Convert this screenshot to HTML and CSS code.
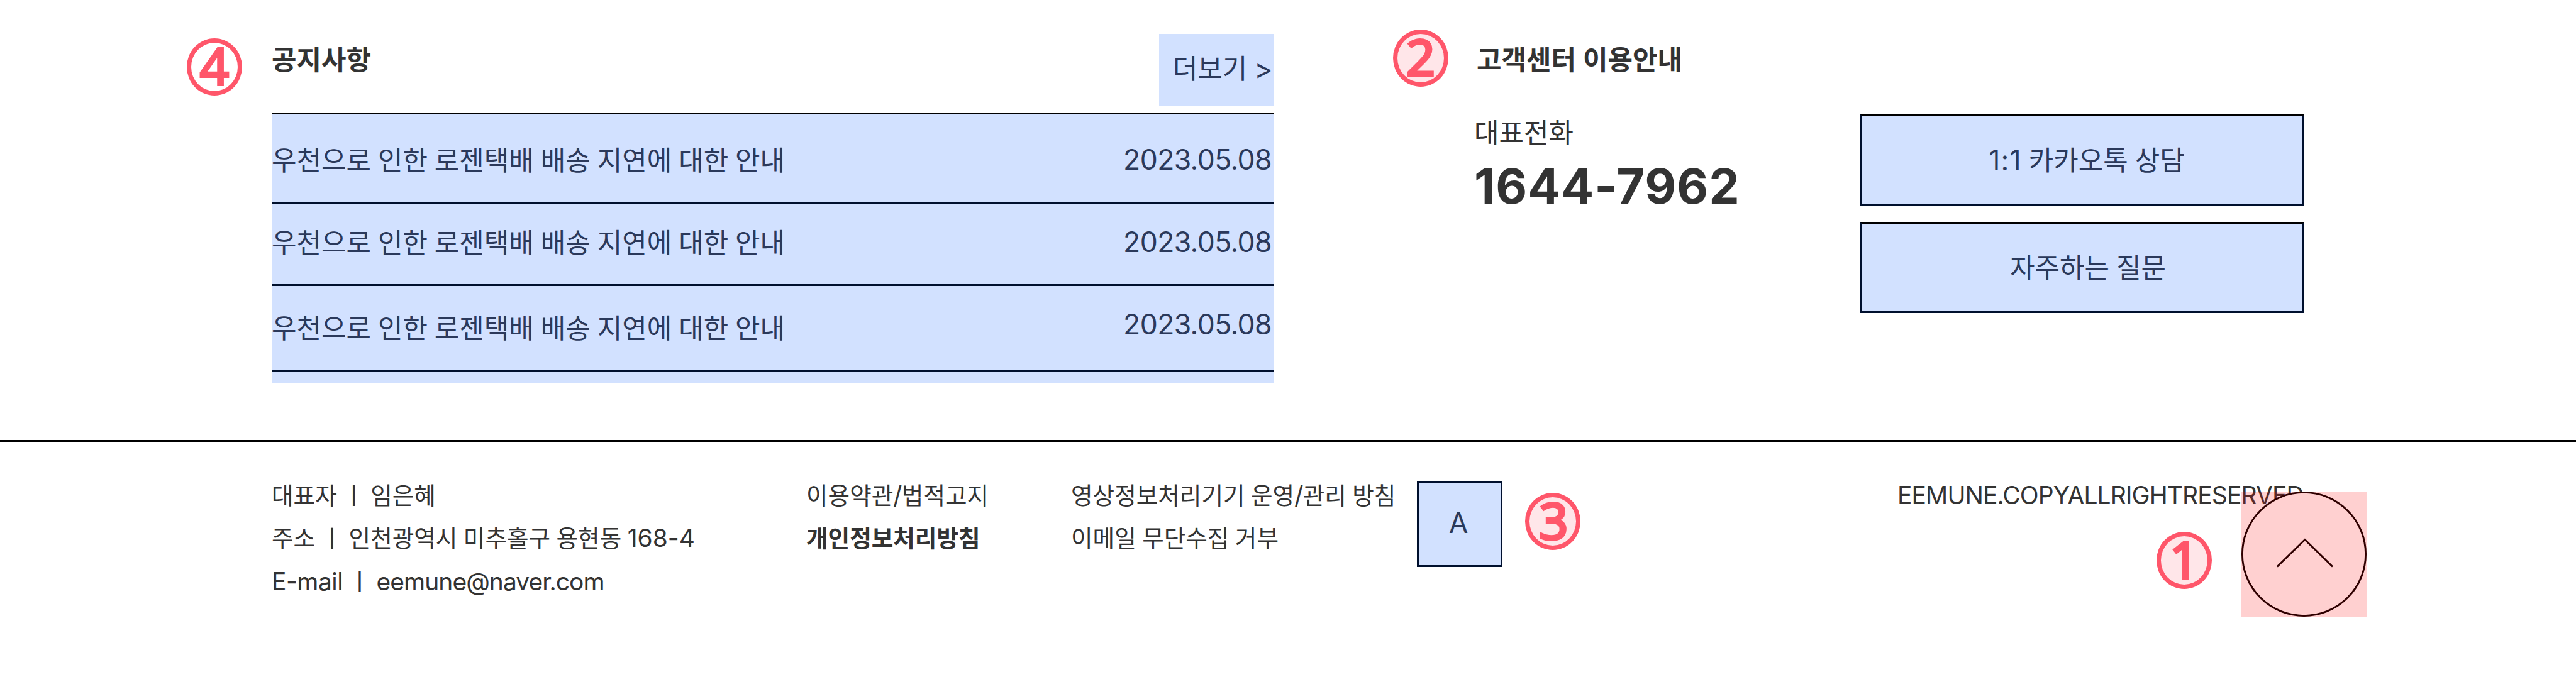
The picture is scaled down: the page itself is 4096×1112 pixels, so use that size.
FILE: index.html
```html
<!DOCTYPE html>
<html lang="ko">
<head>
<meta charset="utf-8">
<title>EEMUNE</title>
<link rel="stylesheet" href="styles.css">
</head>
<body>
<main class="top">
  <section class="notice">
    <div class="badge badge-4">4</div>
    <header class="notice-head">
      <h2 class="title">공지사항</h2>
      <a class="more">더보기 <span class="en">&gt;</span></a>
    </header>
    <ul class="list">
      <li class="row row-1"><span class="subject">우천으로 인한 로젠택배 배송 지연에 대한 안내</span><time class="en">2023.05.08</time></li>
      <li class="row row-2"><span class="subject">우천으로 인한 로젠택배 배송 지연에 대한 안내</span><time class="en">2023.05.08</time></li>
      <li class="row row-3"><span class="subject">우천으로 인한 로젠택배 배송 지연에 대한 안내</span><time class="en">2023.05.08</time></li>
    </ul>
  </section>
  <section class="center">
    <div class="badge badge-2 filled">2</div>
    <div class="contact">
      <h2 class="title">고객센터 이용안내</h2>
      <p class="label">대표전화</p>
      <p class="phone">1644-7962</p>
    </div>
    <div class="buttons">
      <a class="button"><span class="en ratio">1:1</span> 카카오톡 상담</a>
      <a class="button faq">자주하는 질문</a>
    </div>
  </section>
</main>
<footer class="footer">
  <div class="col info">
    <p>대표자 ㅣ 임은혜</p>
    <p>주소 ㅣ 인천광역시 미추홀구 용현동 <span class="en lot">168-4</span></p>
    <p><span class="en">E-mail</span> ㅣ <span class="en email">eemune@naver.com</span></p>
  </div>
  <div class="col terms">
    <p>이용약관<span class="en">/</span>법적고지</p>
    <p class="strong">개인정보처리방침</p>
  </div>
  <div class="col policy">
    <p>영상정보처리기기 운영<span class="en">/</span>관리 방침</p>
    <p>이메일 무단수집 거부</p>
  </div>
  <div class="mark">A</div>
  <div class="badge badge-3 filled">3</div>
  <p class="copyright">EEMUNE.COPYALLRIGHTRESERVED</p>
  <div class="badge badge-1 filled">1</div>
  <a class="to-top"><svg viewBox="0 0 280 280"><circle cx="140" cy="140" r="138"/><path d="M80 168L142 107.5L204 168"/></svg></a>
</footer>
</body>
</html>
```
FILE: styles.css
```css
* { box-sizing: border-box; margin: 0; padding: 0; }

body {
  width: 4096px;
  height: 1112px;
  overflow: hidden;
  position: relative;
  background: #fff;
  color: #333;
  font: 400 42.95px/60px "Noto Sans CJK KR", sans-serif;
  word-spacing: -1.1px;
  white-space: nowrap;
}

ul { list-style: none; }

/* Latin letters and digits inside Korean text */
.en {
  font-family: Inter, "Noto Sans CJK KR", sans-serif;
  font-size: 1.036em;
  line-height: 1;
  letter-spacing: -0.013em;
}

.top { display: flex; height: 700px; }

/* Notices */
.notice { width: 1593px; margin-left: 432px; padding-top: 54px; }
.notice-head { display: flex; justify-content: space-between; height: 125px; }
.title { font-size: 42.95px; font-weight: 700; line-height: 60px; padding-top: 8px; }
.more {
  width: 182px;
  height: 114px;
  padding: 22px 2px 0 0;
  background: #d2e1ff;
  color: #2b395b;
  text-align: right;
}
.list { height: 430px; border-top: 3px solid #000; background: #d2e1ff; color: #2b395b; }
.row {
  display: flex;
  justify-content: space-between;
  padding-right: 3px;
  border-bottom: 3px solid #00102e;
}
.row time { line-height: 60px; padding-top: 2px; }
.row-1 { height: 142px; padding-top: 40px; }
.row-2 { height: 131px; padding-top: 29px; }
.row-3 { height: 137px; padding-top: 29px; }
.row-3 .subject { padding-top: 5px; }

/* Customer centre */
.center { display: flex; margin-left: 319px; padding-top: 54px; }
.contact { width: 614px; }
.contact .title { padding-left: 4px; }
.label { margin-top: 56px; }
.phone { font: 700 77px/94px Inter, sans-serif; letter-spacing: 1px; margin-top: 11px; }
.buttons { display: flex; flex-direction: column; gap: 26px; padding-top: 128px; }
.button {
  width: 706px;
  height: 145px;
  padding: 37px 0 0 14px;
  border: 3px solid #00102e;
  border-top-color: #000;
  background: #d2e1ff;
  color: #2b395b;
  text-align: center;
}
.faq { padding-left: 18px; }
.ratio { letter-spacing: 1.2px; }

/* Footer */
.footer {
  display: flex;
  height: 412px;
  padding-left: 432px;
  border-top: 3px solid #000;
  font-size: 37.6px;
  line-height: 68.27px;
}
.col { padding-top: 49px; }
.col p { height: 68.27px; }
.info { width: 850px; }
.terms { width: 421px; }
.policy { width: 550px; }
.strong { font-weight: 700; }
.lot { letter-spacing: 0; }
.email { letter-spacing: -0.024em; }
.mark {
  width: 136px;
  height: 137px;
  margin-top: 62px;
  border: 3px solid #00102e;
  background: #d2e1ff;
  color: #2b395b;
  font: 400 44.5px/129px Inter, sans-serif;
  text-align: center;
  text-indent: -4px;
}
.copyright {
  margin: 51px 0 0 628px;
  font-family: Inter, sans-serif;
  font-size: 39px;
  letter-spacing: -0.9px;
}

/* Numbered markers lie over the page */
.badge {
  position: absolute;
  width: 88px;
  height: 91px;
  border: 7px solid #ff566a;
  border-radius: 50%;
  color: #ff566a;
  font: 400 81px/71px "Noto Sans", sans-serif;
  -webkit-text-stroke: 3.8px #ff566a;
  text-align: center;
}
.filled { background: #ffe6e9; }
.badge-1 { left: 3429px; top: 846px; }
.badge-2 { left: 2215px; top: 47px; }
.badge-3 { left: 2425px; top: 784px; text-indent: 3px; }
.badge-4 { left: 297px; top: 61px; }

/* Floating scroll-to-top button */
.to-top { position: absolute; left: 3564px; top: 782px; width: 199px; height: 199px; }
.to-top svg {
  display: block;
  width: 199px;
  height: 199px;
  background: rgba(255, 0, 0, 0.184);
}
.to-top circle { fill: #ffd0d0; stroke: #2f0000; stroke-width: 4; }
.to-top path { fill: none; stroke: #2f0000; stroke-width: 4; }
```
